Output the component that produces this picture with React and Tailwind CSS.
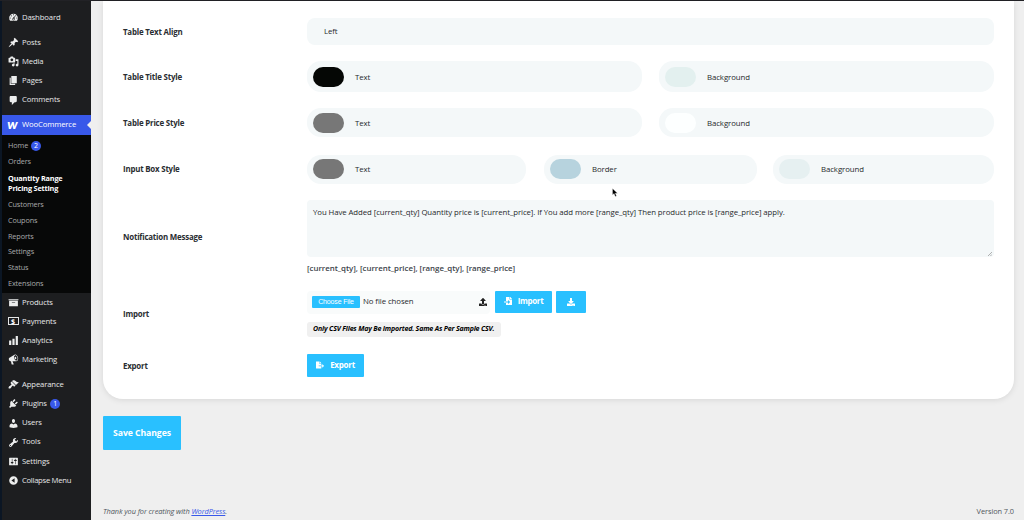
import clsx from 'clsx';
import { FaDownload, FaFileExport, FaFileImport, FaUpload } from 'react-icons/fa';

const icons = {
    dashboard: 'M3.76 16h12.48c1.1-1.37 1.76-3.11 1.76-5 0-4.42-3.58-8-8-8s-8 3.58-8 8c0 1.89.66 3.63 1.76 5zM10 4c.55 0 1 .45 1 1s-.45 1-1 1-1-.45-1-1 .45-1 1-1zM6 6c.55 0 1 .45 1 1s-.45 1-1 1-1-.45-1-1 .45-1 1-1zm8 0c.55 0 1 .45 1 1s-.45 1-1 1-1-.45-1-1 .45-1 1-1zm-5.37 5.55L12 7v6c0 1.1-.9 2-2 2s-2-.9-2-2c0-.57.24-1.08.63-1.45zM4 10c.55 0 1 .45 1 1s-.45 1-1 1-1-.45-1-1 .45-1 1-1zm12 0c.55 0 1 .45 1 1s-.45 1-1 1-1-.45-1-1 .45-1 1-1zm-5 3c0-.55-.45-1-1-1s-1 .45-1 1 .45 1 1 1 1-.45 1-1z',
    pin: 'M10.44 3.02l1.82-1.82 6.36 6.35-1.83 1.82c-1.05-.68-2.48-.57-3.41.36l-.75.75c-.92.93-1.04 2.35-.35 3.41l-1.83 1.82-2.41-2.41-2.8 2.79c-.42.42-3.38 2.71-3.8 2.29s1.86-3.39 2.28-3.81l2.79-2.79L4.1 9.36l1.83-1.82c1.05.69 2.48.57 3.4-.36l.75-.75c.93-.92 1.05-2.35.36-3.41z',
    media: 'M13 11V4c0-.55-.45-1-1-1h-1.67L9 1H5L3.67 3H2c-.55 0-1 .45-1 1v7c0 .55.45 1 1 1h10c.55 0 1-.45 1-1zM7 4.5c1.38 0 2.5 1.12 2.5 2.5S8.38 9.5 7 9.5 4.5 8.38 4.5 7 5.62 4.5 7 4.5zM14 6h5v10.5c0 1.38-1.12 2.5-2.5 2.5S14 17.88 14 16.5s1.12-2.5 2.5-2.5c.17 0 .34.02.5.05V9h-3V6zm-4 8.05V13h2v3.5c0 1.38-1.12 2.5-2.5 2.5S7 17.88 7 16.5 8.12 14 9.5 14c.17 0 .34.02.5.05z',
    pages: 'M6 15V2h10v13H6zm-1 1h8v2H3V5h2v11z',
    comments: 'M5 2h9c1.1 0 2 .9 2 2v7c0 1.1-.9 2-2 2h-2l-5 5v-5H5c-1.1 0-2-.9-2-2V4c0-1.1.9-2 2-2z',
    products: 'M19 4v2H1V4h18zM2 7h16v10H2V7zm11 3V9H7v1h6z',
    analytics: 'M18 18V2h-4v16h4zm-6 0V7H8v11h4zm-6 0v-8H2v8h4z',
    marketing: 'M18.15 5.94c.46 1.62.38 3.22-.02 4.48-.42 1.28-1.26 2.18-2.3 2.48-.16.06-.26.06-.4.06-.06.02-.12.02-.18.02-.06.02-.14.02-.22.02h-6.8l2.22 5.5c.02.14-.06.26-.14.34-.08.1-.24.16-.34.16H6.95c-.1 0-.26-.06-.34-.16-.08-.08-.16-.2-.14-.34l-1-5.5H4.25l-.02-.02c-.5.06-1.08-.18-1.54-.62s-.88-1.08-1.06-1.88c-.24-.8-.2-1.56-.02-2.2.18-.62.58-1.08 1.06-1.3l.02-.02 9-5.4c.1-.06.18-.1.24-.16.06-.04.14-.08.24-.12.16-.08.28-.12.5-.18 1.04-.3 2.24.1 3.22.98s1.84 2.24 2.26 3.86zm-2.58 5.98h-.02c.4-.1.74-.34 1.04-.7.58-.7.86-1.76.86-3.04 0-.64-.1-1.3-.28-1.98-.34-1.36-1.02-2.5-1.78-3.24s-1.68-1.1-2.46-.88c-.82.22-1.4.96-1.7 2-.32 1.04-.28 2.36.06 3.72.38 1.36 1 2.5 1.8 3.24.78.74 1.62 1.1 2.48.88zm-2.54-7.08c.22-.04.42-.02.62.04.38.16.76.48 1.02 1s.42 1.2.42 1.78c0 .3-.04.56-.12.8-.18.48-.44.84-.86.94-.34.1-.8-.06-1.14-.4s-.64-.86-.78-1.5c-.18-.62-.12-1.24.02-1.72s.48-.84.82-.94z',
    appearance: 'M14.48 11.06L7.41 3.99l1.5-1.5c.5-.56 2.3-.47 3.51.32 1.21.8 1.43 1.28 2.91 2.1 1.18.64 2.45 1.26 4.45.85zm-.71.71L6.7 4.7 4.93 6.47c-.39.39-.39 1.02 0 1.41l1.06 1.06c.39.39.39 1.03 0 1.42-.6.6-1.43 1.11-2.21 1.69-.35.26-.7.53-1.01.84C1.43 14.23.4 16.08 1.4 17.07c.99 1 2.84-.03 4.18-1.36.31-.31.58-.66.85-1.02.57-.78 1.08-1.61 1.69-2.21.39-.39 1.02-.39 1.41 0l1.06 1.06c.39.39 1.02.39 1.41 0z',
    plugins: 'M13.11 4.36L9.87 7.6 8 5.73l3.24-3.24c.35-.34 1.05-.2 1.56.32.52.51.66 1.21.31 1.55zm-8 1.77l.91-1.12 9.01 9.01-1.19.84c-.71.71-2.63 1.16-3.82 1.16H6.14L4.9 17.26c-.59.59-1.54.59-2.12 0-.59-.58-.59-1.53 0-2.12l1.24-1.24v-3.88c0-1.13.4-3.19 1.09-3.89zm7.26 3.97l3.24-3.24c.34-.35 1.04-.21 1.55.31.52.51.66 1.21.31 1.55l-3.24 3.25z',
    users: 'M10 9.25c-2.27 0-2.73-3.44-2.73-3.44C7 4.02 7.82 2 9.97 2c2.16 0 2.98 2.02 2.71 3.81 0 0-.41 3.44-2.68 3.44zm0 2.57L12.72 10c2.39 0 4.52 2.33 4.52 4.53v2.49s-3.65 1.13-7.24 1.13c-3.65 0-7.24-1.13-7.24-1.13v-2.49c0-2.25 1.94-4.48 4.47-4.48z',
    tools: 'M16.68 9.77c-1.34 1.34-3.3 1.67-4.95.99l-5.41 6.52c-.99.99-2.59.99-3.58 0s-.99-2.59 0-3.57l6.52-5.42c-.68-1.65-.35-3.61.99-4.95 1.28-1.28 3.12-1.62 4.72-1.06l-2.89 2.89 2.82 2.82 2.86-2.87c.53 1.58.18 3.39-1.08 4.65zM3.81 16.21c.4.39 1.04.39 1.43 0 .4-.4.4-1.04 0-1.43-.39-.4-1.03-.4-1.43 0-.39.39-.39 1.03 0 1.43z',
    settings: 'M18 16V4c0-.55-.45-1-1-1H3c-.55 0-1 .45-1 1v12c0 .55.45 1 1 1h14c.55 0 1-.45 1-1zM8 11h1c.55 0 1 .45 1 1s-.45 1-1 1H8v1.5c0 .28-.22.5-.5.5s-.5-.22-.5-.5V13H6c-.55 0-1-.45-1-1s.45-1 1-1h1V5.5c0-.28.22-.5.5-.5s.5.22.5.5V11zm5-2h-1c-.55 0-1-.45-1-1s.45-1 1-1h1V5.5c0-.28.22-.5.5-.5s.5.22.5.5V7h1c.55 0 1 .45 1 1s-.45 1-1 1h-1v5.5c0 .28-.22.5-.5.5s-.5-.22-.5-.5V9z',
    collapse: 'M10 2.16c4.33 0 7.84 3.51 7.84 7.84s-3.51 7.84-7.84 7.84S2.16 14.33 2.16 10 5.71 2.16 10 2.16zm2 11.72V6.12L6.18 9.97z',
};

const menuTop = [
    [{ icon: 'dashboard', label: 'Dashboard' }],
    [
        { icon: 'pin', label: 'Posts' },
        { icon: 'media', label: 'Media' },
        { icon: 'pages', label: 'Pages' },
        { icon: 'comments', label: 'Comments' },
    ],
];

const menuBottom = [
    [
        { icon: 'products', label: 'Products' },
        { icon: 'payments', label: 'Payments' },
        { icon: 'analytics', label: 'Analytics' },
        { icon: 'marketing', label: 'Marketing' },
    ],
    [
        { icon: 'appearance', label: 'Appearance' },
        { icon: 'plugins', label: 'Plugins', badge: '1' },
        { icon: 'users', label: 'Users' },
        { icon: 'tools', label: 'Tools' },
        { icon: 'settings', label: 'Settings' },
        { icon: 'collapse', label: 'Collapse Menu' },
    ],
];

const submenu = ['Customers', 'Coupons', 'Reports', 'Settings', 'Status', 'Extensions'];

const Icon = ({ name }) => {
    if (name === 'payments') {
        return (
            <span className="flex h-[8px] w-[11px] shrink-0 items-center justify-center border border-[#e4e5e6] text-[7px] leading-none font-bold text-white">
                $
            </span>
        );
    }
    return (
        <svg viewBox="0 0 20 20" className="h-[11px] w-[11px] shrink-0 fill-[#eceded]">
            <path d={icons[name]} />
        </svg>
    );
};

const Badge = ({ children }) => (
    <span className="flex h-[10px] w-[10px] items-center justify-center rounded-full bg-[#3858e9] text-[7px] leading-none tracking-normal text-white">
        {children}
    </span>
);

const MenuItem = ({ icon, label, badge }) => (
    <li className="flex h-[19.15px] items-center gap-[3.5px] pl-[5.5px]">
        <Icon name={icon} />
        <span className={clsx(icon === 'collapse' && 'tracking-[-0.3px]')}>{label}</span>
        {badge && <Badge>{badge}</Badge>}
    </li>
);

const MenuGroups = ({ groups }) => (
    <div className="flex flex-col gap-[6px]">
        {groups.map((group) => (
            <ul key={group[0].label}>
                {group.map((item) => (
                    <MenuItem key={item.label} {...item} />
                ))}
            </ul>
        ))}
    </div>
);

const Sidebar = () => (
    <nav className="h-full w-[91px] shrink-0 border-l-2 border-[#0b1624] bg-[#1d1e20] pt-[7px] text-[7.7px] tracking-[-0.13px] text-[#e6e7e8]">
        <MenuGroups groups={menuTop} />
        <div className="relative mt-[5.5px] flex h-[20px] items-center gap-[3px] bg-[#3858e9] pl-[4px] text-white">
            <span className="flex w-[13px] justify-center font-['Lato'] text-[14px] leading-none font-black italic"><span className="-mt-[3px]">w</span></span>
            <span>WooCommerce</span>
            <span className="absolute top-[6px] right-0 border-y-4 border-r-4 border-y-transparent border-r-[#f0f0f1]" />
        </div>
        <div className="h-[157.5px] bg-[#070808] pt-[2.5px] pl-[6px] text-[7.3px] text-[#a9abad]">
            <div className="flex h-[15.6px] items-center gap-[3px]">
                Home <Badge>2</Badge>
            </div>
            <div className="flex h-[15.6px] items-center">Orders</div>
            <div className="py-[4px] leading-[10px] font-bold tracking-[-0.17px] text-white">
                Quantity Range
                <br />
                Pricing Setting
            </div>
            {submenu.map((label) => (
                <div key={label} className="flex h-[15.7px] items-center">{label}</div>
            ))}
        </div>
        <MenuGroups groups={menuBottom} />
    </nav>
);

const Row = ({ label, className, children }) => (
    <div className={clsx('flex items-center', className)}>
        <div className="w-[184px] shrink-0 pt-[2px] text-[7.9px] font-bold tracking-[-0.2px] text-[#2a2e32]">{label}</div>
        <div className="w-[687px]">{children}</div>
    </div>
);

const ColorField = ({ label, color, className }) => (
    <div className={clsx('flex items-center rounded-[14px] bg-[#f4f8f9] pl-[6px]', className)}>
        <span className={clsx('mr-[11px] h-[20px] w-[31px] rounded-[10px]', color)} />
        <span className="pt-[2px]">{label}</span>
    </div>
);

const Button = ({ className, children }) => (
    <button className={clsx('flex items-center justify-center rounded-[1px] bg-[#29c0ff] font-bold text-white', className)}>
        {children}
    </button>
);

const SettingsCard = () => (
    <section className="h-[398px] w-[911px] rounded-b-[20px] bg-white pt-[17px] pl-[20px] shadow-[0_1px_6px_rgba(0,0,0,0.1)]">
        <Row label="Table Text Align" className="h-[27px]">
            <div className="flex h-[27px] items-center rounded-[8px] bg-[#f4f8f9] pl-[17px]">Left</div>
        </Row>
        <Row label="Table Title Style" className="mt-[16px] h-[31px]">
            <div className="flex justify-between">
                <ColorField label="Text" color="bg-[#050705]" className="h-[31px] w-[335px]" />
                <ColorField label="Background" color="bg-[#e3f0ef]" className="h-[31px] w-[335px]" />
            </div>
        </Row>
        <Row label="Table Price Style" className="mt-[16px] h-[29px]">
            <div className="flex justify-between">
                <ColorField label="Text" color="bg-[#777777]" className="h-[29px] w-[335px]" />
                <ColorField label="Background" color="bg-[#fdffff]" className="h-[29px] w-[335px]" />
            </div>
        </Row>
        <Row label="Input Box Style" className="mt-[17px] h-[30px]">
            <div className="flex">
                <ColorField label="Text" color="bg-[#777777]" className="h-[29px] w-[219px]" />
                <ColorField label="Border" color="bg-[#b7d3de]" className="ml-[18px] h-[29px] w-[213px]" />
                <ColorField label="Background" color="bg-[#e6f0f1]" className="ml-[16px] h-[29px] w-[221px]" />
            </div>
        </Row>
        <Row label="Notification Message" className="mt-[16px] h-[74px]">
            <div className="relative">
                <textarea
                    className="block h-[57px] w-[687px] resize-none rounded-[4px] bg-[#f4f8f9] px-[6px] pt-[7px] leading-[11px] outline-none"
                    defaultValue="You Have Added [current_qty] Quantity price is [current_price]. If You add more [range_qty] Then product price is [range_price] apply."
                />
                <svg viewBox="0 0 5 5" className="absolute right-[2px] bottom-px h-[4px] w-[4px] stroke-[#777]" strokeWidth="0.7">
                    <path d="M0 5L5 0M3 5L5 3" />
                </svg>
            </div>
            <p className="mt-[5px] text-[7.9px] leading-[12px] font-semibold tracking-[-0.03px] text-[#3c434a]">
                [current_qty], [current_price], [range_qty], [range_price]
            </p>
        </Row>
        <Row label="Import" className="mt-[16px] h-[47px]">
            <div className="flex">
                <div className="flex h-[23px] w-[183px] items-center rounded-[4px] bg-[#f9fbfb] pl-[5px]">
                    <span className="flex h-[12px] w-[48px] items-center justify-center rounded-[1px] bg-[#29c0ff] font-['Liberation_Sans'] text-[7px] tracking-[-0.15px] text-white">
                        Choose File
                    </span>
                    <span className="ml-[3px]">No file chosen</span>
                    <FaUpload className="mr-[3px] ml-auto h-[8px] w-[8px] text-[#222]" />
                </div>
                <Button className="ml-[5px] h-[22px] w-[57px] gap-[6px] pb-[2px] text-[8px] tracking-[-0.35px]">
                    <FaFileImport className="h-[8px] w-[8px]" />
                    Import
                </Button>
                <Button className="ml-[4px] h-[22px] w-[30px]">
                    <FaDownload className="h-[8px] w-[8px]" />
                </Button>
            </div>
            <p className="mt-[8px] flex h-[15px] w-[194px] items-center rounded-[3px] bg-[#f0f0f0] pl-[6px] text-[7px] font-bold tracking-[-0.17px] text-black italic">
                Only CSV Files May Be Imported. Same As Per Sample CSV.
            </p>
        </Row>
        <Row label="Export" className="mt-[17px] h-[23px]">
            <Button className="h-[23px] w-[57px] gap-[6px] pb-[2px] text-[8px] tracking-[-0.25px]">
                <FaFileExport className="h-[8px] w-[8px]" />
                Export
            </Button>
        </Row>
    </section>
);

export default function App() {
    return (
        <div className="relative flex h-[520px] w-[1024px] flex-col overflow-hidden bg-[#efefef] font-['Open_Sans','Noto_Sans',sans-serif] text-[7.8px] leading-normal">
            <div className="h-px shrink-0 bg-[#222226]" />
            <div className="flex min-h-0 flex-1">
                <Sidebar />
                <main className="flex flex-1 flex-col pl-[12px] tracking-[-0.08px] text-[#26292c]">
                    <SettingsCard />
                    <Button className="mt-[17px] h-[34px] w-[78px] pt-px text-[8.7px]">Save Changes</Button>
                    <footer className="mt-auto mr-[10px] mb-[3px] flex justify-between text-[7.4px] leading-[12px] text-[#50575e]">
                        <p className="tracking-[-0.1px] italic">
                            Thank you for creating with <a className="text-[#3858e9] underline">WordPress</a>.
                        </p>
                        <p>Version 7.0</p>
                    </footer>
                </main>
            </div>
            {/* Mouse pointer */}
            <svg viewBox="0 0 12 18" className="absolute top-[188px] left-[612px] h-[9px] w-[6px]">
                <path d="M1 1v13l3-3 2.5 6 2.5-1-2.5-5.500h4.500z" fill="#000" stroke="#fff" strokeWidth="0.6" />
            </svg>
        </div>
    );
}
